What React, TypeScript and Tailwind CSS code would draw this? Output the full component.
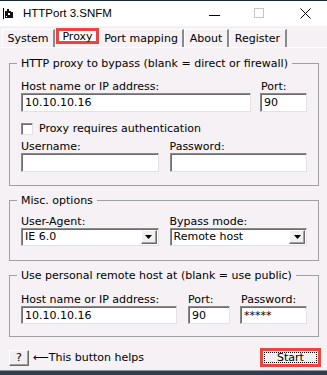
import type { ReactNode } from "react";

const sunken =
  "border border-t-[#8a8a8a] border-l-[#8a8a8a] border-b-[#e2e2e2] border-r-[#e2e2e2] bg-white shadow-[inset_1px_1px_0_#6d6d6d]";
const raised =
  "border border-t-white border-l-white border-b-[#6a6a6a] border-r-[#6a6a6a] bg-[#f0f0f0] shadow-[inset_-1px_-1px_0_#a0a0a0]";

function Field({ value = "", className = "h-[19px]" }: { value?: string; className?: string }) {
  return (
    <input
      readOnly
      value={value}
      className={`${sunken} w-full min-w-0 pl-[3px] text-black outline-none ${className}`}
    />
  );
}

function Combo({ value }: { value: string }) {
  return (
    <div className={`${sunken} flex h-[18px] items-center justify-between pl-[3px] pr-[1px]`}>
      <span>{value}</span>
      <span className={`${raised} flex h-[14px] w-[16px] items-center justify-center`}>
        <svg width="7" height="4" viewBox="0 0 7 4">
          <path d="M0 0h7L3.5 4z" fill="#000" />
        </svg>
      </span>
    </div>
  );
}

function Group({ title, className = "", children }: { title: string; className?: string; children: ReactNode }) {
  return (
    <fieldset className={`ml-[9px] mr-[8px] min-w-0 border border-[#a0a0a0] ${className}`}>
      <legend className="ml-[7px] px-[4px] leading-[13px]">{title}</legend>
      {children}
    </fieldset>
  );
}

const tabs = [
  { label: "System", w: "w-[53px]" },
  { label: "Proxy", w: "w-[44px]", active: true },
  { label: "Port mapping", w: "w-[85px]" },
  { label: "About", w: "w-[45px]" },
  { label: "Register", w: "w-[58px]" },
];

export default function App() {
  return (
    <div className="flex h-[375px] w-[327px] flex-col overflow-hidden bg-[#f5f1f5] font-['DejaVu_Sans',sans-serif] text-[11px] text-black">
      <div className="h-px bg-[#1d2a3a]" />

      {/* title bar */}
      <div className="flex h-[25px] items-center bg-white pl-[3px] pr-[16px]">
        <svg width="11" height="11" viewBox="0 0 11 11">
          <rect x="0" y="0" width="1" height="11" fill="#000" />
          <path d="M2 3h2V1h2v2h2v1h2v6H2z" fill="#111" />
          <rect x="5" y="5" width="2" height="2" fill="#fff" />
          <rect x="3" y="8" width="1" height="1" fill="#fff" />
        </svg>
        <span className="ml-[9px] font-['Liberation_Sans',sans-serif] text-[11.5px]">HTTPort 3.SNFM</span>
        <span className="flex-1" />
        <svg width="11" height="11" viewBox="0 0 11 11" className="mt-[3px]">
          <rect x="0" y="5" width="11" height="1" fill="#000" />
        </svg>
        <svg width="10" height="10" viewBox="0 0 10 10" className="ml-[34px] -mt-[1px]">
          <rect x="0.5" y="0.5" width="9" height="9" fill="none" stroke="#c6c6c6" />
        </svg>
        <svg width="11" height="11" viewBox="0 0 11 11" className="ml-[36px]">
          <path d="M0.5 0.5L10.5 10.5M10.5 0.5L0.5 10.5" stroke="#000" strokeWidth="1" />
        </svg>
      </div>

      {/* tab strip */}
      <div className="flex h-[21px] items-end pl-[2px]">
        {tabs.map((t) =>
          t.active ? (
            <div key={t.label} className={`${t.w} h-[19px] self-end pb-[2px] pl-px`}>
              <div className="flex h-[16px] w-[43px] items-center justify-center border-[3px] border-[#e94541] bg-white leading-none">
                {t.label}
              </div>
            </div>
          ) : (
            <div
              key={t.label}
              className={`${t.w} flex h-[18px] items-center justify-center border-l border-t border-r-2 border-l-white border-t-white border-r-[#8a8a8a] bg-[#f5f1f5] pb-px leading-none`}
            >
              {t.label}
            </div>
          ),
        )}
      </div>

      {/* panel */}
      <div className="flex flex-1 flex-col border-t border-white pt-[9px]">
        <Group title="HTTP proxy to bypass (blank = direct or firewall)">
          <div className="px-[11px] pb-[13px] pt-[10px]">
            <div className="flex gap-[9px]">
              <div className="flex w-[230px] flex-col">
                <span className="leading-[13px]">Host name or IP address:</span>
                <Field value="10.10.10.16" />
              </div>
              <div className="flex min-w-0 flex-1 flex-col">
                <span className="pl-px leading-[13px]">Port:</span>
                <Field value="90" />
              </div>
            </div>
            <div className="mt-[10px] flex h-[13px] items-center gap-[6px]">
              <span className={`${sunken} h-[12px] w-[12px]`} />
              <span className="leading-[13px]">Proxy requires authentication</span>
            </div>
            <div className="mt-[5px] grid grid-cols-[minmax(0,1fr)_minmax(0,1fr)] gap-x-[11px]">
              <div className="flex min-w-0 flex-col">
                <span className="leading-[13px]">Username:</span>
                <Field />
              </div>
              <div className="flex min-w-0 flex-col">
                <span className="leading-[13px]">Password:</span>
                <Field />
              </div>
            </div>
          </div>
        </Group>

        <Group title="Misc. options" className="mt-[8px]">
          <div className="grid grid-cols-[minmax(0,1fr)_minmax(0,1fr)] gap-x-[11px] px-[11px] pb-[14px] pt-[8px]">
            <div className="flex min-w-0 flex-col">
              <span className="leading-[13px]">User-Agent:</span>
              <Combo value="IE 6.0" />
            </div>
            <div className="flex min-w-0 flex-col">
              <span className="leading-[13px]">Bypass mode:</span>
              <Combo value="Remote host" />
            </div>
          </div>
        </Group>

        <Group title="Use personal remote host at (blank = use public)" className="mt-[8px]">
          <div className="flex px-[11px] pb-[12px] pt-[11px]">
            <div className="flex w-[156px] flex-col">
              <span className="leading-[13px]">Host name or IP address:</span>
              <Field value="10.10.10.16" className="h-[18px]" />
            </div>
            <div className="ml-[11px] flex w-[42px] flex-col">
              <span className="leading-[13px]">Port:</span>
              <Field value="90" className="h-[18px]" />
            </div>
            <div className="ml-[10px] flex min-w-0 flex-1 flex-col">
              <span className="pl-px leading-[13px]">Password:</span>
              <Field value="*****" className="h-[18px]" />
            </div>
          </div>
        </Group>

        <div className="ml-[9px] mr-[6px] mt-[11px] flex items-center">
          <button className={`${raised} h-[16px] w-[20px] leading-none`}>?</button>
          <span className="ml-[4px] leading-[13px]">⟵This button helps</span>
          <div className="ml-auto border-[3px] border-[#e94541]">
            <div className="bg-[#f0f0f0] p-px">
              <div className="flex h-[11px] w-[53px] items-center justify-center border border-dotted border-black leading-none">
                Start
              </div>
            </div>
          </div>
        </div>
      </div>

      <div className="h-[5px] border-t border-[#8d96a0] bg-[#2f3d4d]" />
    </div>
  );
}
